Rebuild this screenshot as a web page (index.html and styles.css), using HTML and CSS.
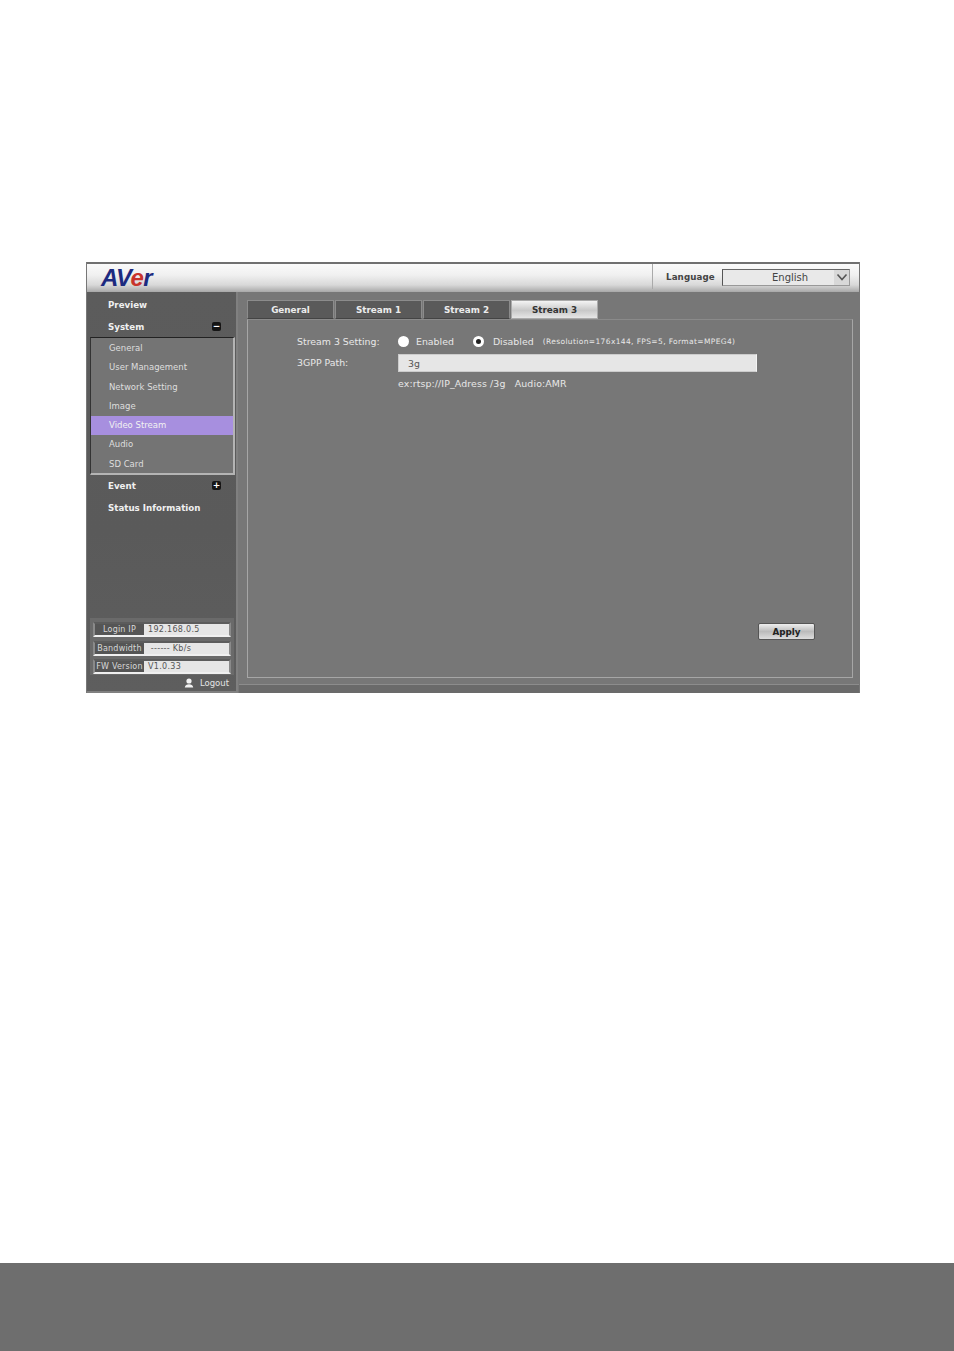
FILE: index.html
```html
<!DOCTYPE html>
<html lang="en">
<head>
    <meta charset="UTF-8">
    <title>Stream 3</title>
    <link rel="stylesheet" href="styles.css">
</head>
<body>
    <div class="page">
        <div class="app">
            <div class="header">
                <div class="logo">AV<span class="logo-e">e</span>r</div>
                <div class="language">
                    <span class="language-label">Language</span>
                    <div class="select">
                        <span class="select-text">English</span>
                        <span class="select-arrow">
                            <svg width="12" height="10" viewBox="0 0 12 10"><path d="M1.5 2.5 L6 7.5 L10.5 2.5" fill="none" stroke="#555" stroke-width="1.6"/></svg>
                        </span>
                    </div>
                </div>
            </div>

            <div class="main">
                <div class="sidebar">
                    <div class="menu-item">Preview</div>
                    <div class="menu-item">System<span class="toggle">&minus;</span></div>
                    <div class="submenu">
                        <div class="submenu-item">General</div>
                        <div class="submenu-item">User Management</div>
                        <div class="submenu-item">Network Setting</div>
                        <div class="submenu-item">Image</div>
                        <div class="submenu-item active">Video Stream</div>
                        <div class="submenu-item">Audio</div>
                        <div class="submenu-item">SD Card</div>
                    </div>
                    <div class="menu-item event">Event<span class="toggle">+</span></div>
                    <div class="menu-item">Status Information</div>

                    <div class="info">
                        <div class="info-row"><span class="info-label">Login IP</span><span class="info-value">192.168.0.5</span></div>
                        <div class="info-row"><span class="info-label">Bandwidth</span><span class="info-value">&nbsp;------ Kb/s</span></div>
                        <div class="info-row"><span class="info-label">FW Version</span><span class="info-value">V1.0.33</span></div>
                    </div>
                    <div class="logout">
                        <svg width="10" height="10" viewBox="0 0 10 10"><circle cx="5" cy="3" r="2.6" fill="#f2f2f2"/><path d="M0.8 9.5 C1 6.8 3 6.2 5 6.2 C7 6.2 9 6.8 9.2 9.5 Z" fill="#f2f2f2"/></svg>
                        <span>Logout</span>
                    </div>
                </div>

                <div class="content">
                    <div class="tabs">
                        <div class="tab">General</div>
                        <div class="tab">Stream 1</div>
                        <div class="tab">Stream 2</div>
                        <div class="tab selected">Stream 3</div>
                    </div>
                    <div class="panel">
                        <div class="form-row setting-row">
                            <div class="form-label">Stream 3 Setting:</div>
                            <div class="radios">
                                <span class="radio"></span><span class="radio-text">Enabled</span>
                                <span class="radio checked"></span><span class="radio-text">Disabled</span>
                                <span class="radio-note">(Resolution=176x144, FPS=5, Format=MPEG4)</span>
                            </div>
                        </div>
                        <div class="form-row path-row">
                            <div class="form-label">3GPP Path:</div>
                            <div class="path-input">3g</div>
                        </div>
                        <div class="form-row hint-row">
                            <div class="form-label"></div>
                            <div class="hint">ex:rtsp://IP_Adress /3g &nbsp; Audio:AMR</div>
                        </div>
                        <div class="panel-actions">
                            <div class="apply">Apply</div>
                        </div>
                    </div>
                    <div class="content-foot"></div>
                </div>
            </div>
        </div>

        <div class="footer"></div>
    </div>
</body>
</html>
```

FILE: styles.css
```css
* {
    margin: 0;
    padding: 0;
    box-sizing: border-box;
}

html, body {
    width: 100%;
    height: 100%;
    background: #fff;
    overflow: hidden;
}

body {
    font-family: "DejaVu Sans", sans-serif;
    color: #ececec;
}

.page {
    height: 1351px;
    display: flex;
    flex-direction: column;
    padding-top: 262px;
}

.footer {
    margin-top: auto;
    height: 88px;
    background: #6e6e6e;
}


.app {
    width: 774px;
    height: 431px;
    margin-left: 86px;
    display: flex;
    flex-direction: column;
    background: #777;
    border-left: 1px solid #777;
    border-right: 1px solid #777;
}

.header {
    height: 30px;
    display: flex;
    justify-content: space-between;
    border-top: 2px solid #707070;
    background: linear-gradient(#fafafa 0%, #f0f0f0 40%, #d8d8d8 75%, #a8a8a8 100%);
}

.logo {
    padding-left: 14px;
    font-family: "Liberation Sans", sans-serif;
    font-weight: bold;
    font-style: italic;
    font-size: 24px;
    line-height: 28px;
    letter-spacing: -0.6px;
    color: #1c2a80;
}

.logo-e {
    color: #c8342c;
}

.language {
    width: 207px;
    height: 25px;
    display: flex;
    align-items: center;
    border-left: 1px solid #aaa;
    padding-left: 13px;
}

.language-label {
    width: 56px;
    font-size: 8.7px;
    font-weight: bold;
    letter-spacing: 0.1px;
    color: #444;
}

.select {
    width: 128px;
    height: 17px;
    margin-top: 1px;
    display: flex;
    align-items: center;
    justify-content: space-between;
    background: #e9e9e9;
    border: 1px solid #999;
    border-left-color: #555;
    border-top-color: #666;
}

.select-text {
    margin-left: 49px;
    font-size: 10px;
    color: #444;
}

.select-arrow {
    width: 15px;
    height: 15px;
    display: flex;
    align-items: center;
    justify-content: center;
    background: #d8d8d8;
}


.main {
    flex: 1;
    display: flex;
    min-height: 0;
}

.sidebar {
    width: 151px;
    display: flex;
    flex-direction: column;
    padding-top: 1px;
    background: linear-gradient(#5c5c5c, #5a5a5a 60%, #5e5e5e);
    border-right: 2px solid #808080;
    border-bottom: 2px solid #808080;
}

.menu-item {
    height: 22px;
    padding: 2px 15px 0 21px;
    display: flex;
    align-items: center;
    justify-content: space-between;
    font-size: 8.7px;
    font-weight: bold;
    color: #f0f0f0;
}

.event {
    margin-top: -1px;
}

.toggle {
    width: 9px;
    height: 9px;
    margin-top: -2px;
    border-radius: 2px;
    background: #151515;
    color: #fff;
    font-size: 9px;
    line-height: 9px;
    text-align: center;
}

.submenu {
    width: 145px;
    height: 138px;
    margin-left: 3px;
    padding-top: 1px;
    background: #747474;
    border-top: 1px solid #222;
    border-left: 1px solid #333;
    border-right: 2px solid #b4b4b4;
    border-bottom: 2px solid #b4b4b4;
}

.submenu-item {
    height: 19.3px;
    padding-left: 18px;
    font-size: 8.5px;
    line-height: 19px;
    color: #dedede;
}

.submenu-item.active {
    background: #a78fdf;
    color: #f2f2f2;
}

.info {
    width: 144px;
    height: 57px;
    margin-top: auto;
    margin-left: 3px;
    padding: 4px 3px 1px;
    display: flex;
    flex-direction: column;
    justify-content: space-between;
    background: #6a6a6a;
}

.info-row {
    height: 15px;
    display: flex;
    align-items: center;
    gap: 4px;
    background: #e6e6e6;
    border: 2px solid #8a8a8a;
    border-top-color: #5c5c5c;
    border-bottom-color: #f0f0f0;
    font-size: 8px;
}

.info-label {
    width: 49px;
    height: 100%;
    background: #555;
    color: #d8d8d8;
    text-align: center;
    line-height: 11px;
    letter-spacing: 0.2px;
    white-space: nowrap;
    overflow: hidden;
}

.info-value {
    color: #555;
    letter-spacing: 0.3px;
}

.logout {
    height: 16px;
    padding-right: 7px;
    display: flex;
    align-items: center;
    justify-content: flex-end;
    gap: 6px;
    font-size: 8.5px;
    color: #e4e4e4;
}


.content {
    flex: 1;
    display: flex;
    flex-direction: column;
    margin-left: 1px;
    background: #777;
}

.tabs {
    height: 27px;
    padding: 8px 0 0 8px;
    display: flex;
    gap: 1px;
}

.tab {
    width: 87px;
    height: 19px;
    background: #5a5a5a;
    border: 1px solid #8c8c8c;
    border-bottom: 1px solid #444;
    text-align: center;
    font-size: 8.8px;
    font-weight: bold;
    line-height: 18px;
    color: #ececec;
}

.tab.selected {
    background: linear-gradient(#f4f4f4, #c8c8c8 55%, #e6e6e6);
    border-color: #aaa;
    color: #333;
}

.panel {
    width: 606px;
    height: 359px;
    margin-left: 8px;
    padding: 11px 0 0 49px;
    display: flex;
    flex-direction: column;
    border: 1px solid #a6a6a6;
    border-top-color: #8a8a8a;
    background: #777;
}

.form-row {
    display: flex;
    align-items: center;
    font-size: 9.4px;
    color: #e8e8e8;
}

.setting-row {
    height: 20px;
}

.path-row {
    height: 21px;
    margin-top: 1px;
}

.hint-row {
    height: 12px;
    margin-top: 4px;
}

.form-label {
    width: 101px;
    flex: none;
}

.radios {
    display: flex;
    align-items: center;
}

.radio {
    width: 11px;
    height: 11px;
    border-radius: 50%;
    background: #fff;
    margin-right: 7px;
}

.radio.checked {
    margin-left: 19px;
    margin-right: 9px;
    border: 3px solid #fff;
    background: #222;
}

.radio-note {
    margin-left: 9px;
    font-size: 7.5px;
    letter-spacing: 0.37px;
}

.path-input {
    width: 359px;
    height: 18px;
    padding-left: 9px;
    background: #e6e6e6;
    border: 1px solid #ccc;
    border-right-color: #f4f4f4;
    color: #555;
    line-height: 18px;
}

.hint {
    letter-spacing: 0.12px;
}

.panel-actions {
    flex: 1;
    display: flex;
    justify-content: flex-end;
    align-items: flex-end;
    padding: 0 37px 37px 0;
}

.apply {
    width: 57px;
    height: 17px;
    background: linear-gradient(#eee, #bbb 50%, #ddd);
    border: 1px solid #555;
    border-radius: 2px;
    text-align: center;
    font-size: 8.8px;
    font-weight: bold;
    line-height: 17px;
    color: #222;
}

.content-foot {
    flex: 1;
    margin-top: 6px;
    background: #6a6a6a;
    border-top: 1px solid #8c8c8c;
}
```
